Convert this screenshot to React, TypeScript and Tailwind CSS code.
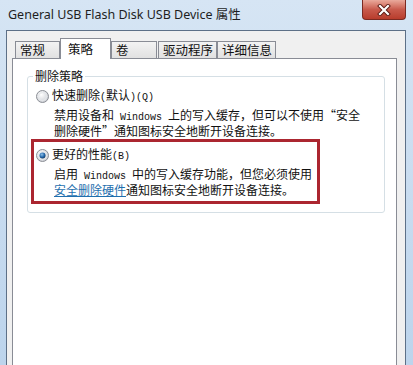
import React from 'react'

const cjk = { fontFamily: '"Noto Sans CJK SC", "Noto Sans", sans-serif' }
const half = { fontFamily: '"Liberation Mono", monospace', fontSize: '10px' }

// half-width latin runs, drawn 6px per char like SimSun
const H = ({ children }: { children: React.ReactNode }) => (
  <span style={half} className="whitespace-pre">
    {children}
  </span>
)

const Radio = ({ checked }: { checked?: boolean }) => (
  <svg width="13" height="13" viewBox="0 0 13 13" className="shrink-0">
    <defs>
      <radialGradient id={checked ? 'rg1' : 'rg0'} cx="0.4" cy="0.35" r="0.7">
        <stop offset="0" stopColor="#ffffff" />
        <stop offset="1" stopColor="#c9ccd2" />
      </radialGradient>
      <radialGradient id="dot" cx="0.4" cy="0.35" r="0.7">
        <stop offset="0" stopColor="#8fc0e8" />
        <stop offset="0.6" stopColor="#2266aa" />
        <stop offset="1" stopColor="#12345a" />
      </radialGradient>
    </defs>
    <circle cx="6.5" cy="6.5" r="6" fill={`url(#${checked ? 'rg1' : 'rg0'})`} stroke="#8c8f96" strokeWidth="1" />
    <circle cx="6.5" cy="6.5" r="4" fill="none" stroke="#e6e8eb" strokeWidth="1" />
    {checked && <circle cx="6.5" cy="6.5" r="3" fill="url(#dot)" />}
  </svg>
)

const tabs = [
  { label: '常规', w: 'w-[45px]' },
  { label: '策略', w: 'w-[51px]', active: true },
  { label: '卷', w: 'w-[46px]' },
  { label: '驱动程序', w: 'w-[59px] ml-[1px]' },
  { label: '详细信息', w: 'w-[59px]' },
]

export default function App() {
  return (
    <div
      className="w-[413px] h-[365px] overflow-hidden flex flex-col bg-gradient-to-b from-[#d6e5f4] to-[#bcd4ec] text-[12px] text-[#111]"
      style={cjk}
    >
      {/* Title bar */}
      <div className="h-[30px] flex items-start shrink-0">
        <div
          className="pl-[8px] pt-[6px] text-[12.5px] leading-[18px] text-[#1e1e1e]"
          style={{ fontFamily: '"Noto Sans", "Noto Sans CJK SC", sans-serif' }}
        >
          General USB Flash Disk USB Device 属性
        </div>
        <div className="ml-auto mr-[7px] w-[44px] h-[20px] rounded-b-[4px] border border-t-0 border-[#7a2a22] bg-gradient-to-b from-[#e9a99c] via-[#c85a4c] to-[#b83c2c] flex items-center justify-center">
          <svg width="14" height="12" viewBox="0 0 14 12">
            <path d="M3 2 L11 10 M11 2 L3 10" stroke="#5a1a14" strokeWidth="4" strokeLinecap="square" />
            <path d="M3 2 L11 10 M11 2 L3 10" stroke="#ffffff" strokeWidth="2.2" strokeLinecap="square" />
          </svg>
        </div>
      </div>

      {/* Client area */}
      <div className="flex-1 flex flex-col ml-[6px] mr-[7px] border border-b-0 border-[#5d7087] bg-[#f0f0f0]">
        {/* Tabs */}
        <div className="flex items-end pl-[8px] pt-[7px] h-[27px] shrink-0">
          {tabs.map((t) =>
            t.active ? (
              <div
                key={t.label}
                className={`${t.w} h-[21px] -mb-[1px] relative z-10 bg-white border border-b-0 border-[#898c95] pl-[7px] pt-[2px] leading-[15px] text-[12.5px]`}
              >
                {t.label}
              </div>
            ) : (
              <div
                key={t.label}
                className={`${t.w} h-[17px] bg-gradient-to-b from-[#f3f3f3] to-[#e1e1e1] border border-b-0 border-[#898c95] pl-[4px] leading-[16px] text-[12.5px]`}
              >
                {t.label}
              </div>
            ),
          )}
        </div>

        {/* Panel */}
        <div className="flex-1 ml-[5px] mr-[8px] bg-white border border-b-0 border-[#898c95] pt-[10px] pl-[14px] pr-[11px]">
          <fieldset className="border border-[#d5dfe5] rounded-[3px] pb-[8px]">
            <legend className="ml-[5px] px-[2px] leading-[14px]">删除策略</legend>

            <div className="pl-[8px] pt-[6px]">
              <div className="flex items-center h-[14px] gap-[3px]">
                <Radio />
                <span className="leading-[14px]">
                  快速删除<H>(</H>默认<H>)(Q)</H>
                </span>
              </div>
              <div className="pl-[18px] mt-[5px] leading-[13px]">
                <div>
                  禁用设备和<H> Windows </H>上的写入缓存，但可以不使用“安全
                </div>
                <div>删除硬件”通知图标安全地断开设备连接。</div>
              </div>
            </div>

            <div className="ml-[3px] mt-[2px] w-[289px] border-[3px] border-[#ab2630] pl-[2px] pt-[6px] pb-[5px]">
              <div className="flex items-center h-[14px] gap-[3px]">
                <Radio checked />
                <span className="leading-[14px]">
                  更好的性能<H>(B)</H>
                </span>
              </div>
              <div className="pl-[18px] mt-[5px] leading-[13px]">
                <div>
                  启用<H> Windows </H>中的写入缓存功能，但您必须使用
                </div>
                <div>
                  <span className="text-[#1f6fae] underline underline-offset-[1px]">安全删除硬件</span>
                  通知图标安全地断开设备连接。
                </div>
              </div>
            </div>
          </fieldset>
        </div>
      </div>
    </div>
  )
}
